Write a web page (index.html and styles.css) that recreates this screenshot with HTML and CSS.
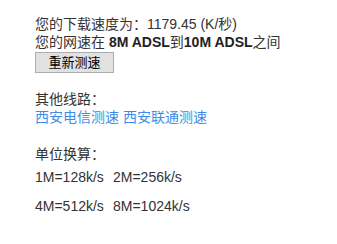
FILE: index.html
```html
<!DOCTYPE html>
<html>
<head>
<meta charset="utf-8">
<link rel="stylesheet" href="styles.css">
</head>
<body>
<div class="page">
  <div class="line">您的下载速度为：1179.45 (K/秒)</div>
  <div class="line">您的网速在 <b>8M ADSL</b>到<b>10M ADSL</b>之间</div>
  <button class="btn">重新测速</button>
  <div class="section">
    <div class="line">其他线路：</div>
    <div class="line links"><a href="#">西安电信测速</a> <a href="#">西安联通测速</a></div>
  </div>
  <div class="section units">
    <div class="line">单位换算：</div>
    <div class="row"><span class="cell">1M=128k/s</span><span>2M=256k/s</span></div>
    <div class="row"><span class="cell">4M=512k/s</span><span>8M=1024k/s</span></div>
  </div>
</div>
</body>
</html>
```

FILE: styles.css
```css
html, body {
  margin: 0;
  padding: 0;
  background: #fff;
}
.page {
  padding: 15px 0 0 35px;
  font-family: "Liberation Sans", "Noto Sans CJK SC", sans-serif;
  font-size: 14px;
  color: #333;
}
.line {
  line-height: 18px;
  height: 18px;
  white-space: nowrap;
}
.line b {
  font-weight: bold;
  color: #222;
}
.btn {
  display: block;
  width: 79px;
  height: 21px;
  margin: 1px 0 0 0;
  padding: 0;
  font-family: "Liberation Sans", "Noto Sans CJK SC", sans-serif;
  font-size: 13px;
  color: #000;
  background: #e1e1e1;
  border: 1px solid #adadad;
  border-radius: 0;
  line-height: 19px;
}
.section {
  margin-top: 17px;
}
.links a {
  color: #3d8de8;
  text-decoration: none;
}
.units {
  margin-top: 19px;
}
.row {
  display: flex;
  margin-top: 5px;
  line-height: 18px;
  white-space: nowrap;
}
.row + .row {
  margin-top: 11px;
}
.cell {
  width: 78px;
}
```
